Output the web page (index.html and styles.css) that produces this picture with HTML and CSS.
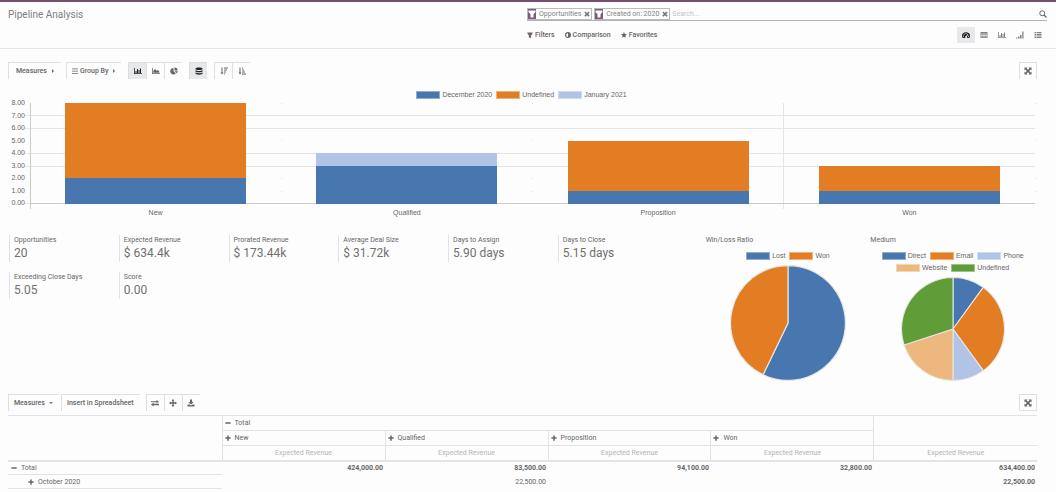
FILE: index.html
```html
<!DOCTYPE html>
<html lang="en">
<head>
<meta charset="utf-8">
<title>Pipeline Analysis</title>
<link rel="stylesheet" href="styles.css">
</head>
<body>
<svg class="sprite" aria-hidden="true">
  <symbol id="funnel" viewBox="0 0 16 16"><path d="M1 1h14v3l-4 4.500V15H5V8.500L1 4z"/></symbol>
  <symbol id="times" viewBox="0 0 16 16"><path d="M1 4l3-3 4 4 4-4 3 3-4 4 4 4-3 3-4-4-4 4-3-3 4-4z"/></symbol>
  <symbol id="adjust" viewBox="0 0 16 16"><path fill-rule="evenodd" d="M8 0a8 8 0 1 0 0 16A8 8 0 0 0 8 0zm0 3v10A5 5 0 0 1 8 3z"/></symbol>
  <symbol id="star" viewBox="0 0 16 16"><path d="M8 0l2.300 5.200L16 6l-4.200 3.800L13 15.500 8 12.600 3 15.500l1.200-5.700L0 6l5.700-.800z"/></symbol>
  <symbol id="search" viewBox="0 0 16 16"><circle cx="6.500" cy="6.500" r="5" fill="none" stroke="currentColor" stroke-width="2"/><path d="M10 10l5 5" stroke="currentColor" stroke-width="2.500"/></symbol>
  <symbol id="gauge" viewBox="0 0 16 16"><path fill-rule="evenodd" d="M0 10a8 7.500 0 0 1 16 0c0 1.500-.500 2.800-1.300 4H1.300C.500 12.800 0 11.500 0 10zm2-.500v2h2v-2zm1.500-4v2h2v-2zM7 4v2h2V4zm4.500 1.500L8.500 10a2 2 0 1 0 1.500.800L12.500 6.500zM12 9.500v2h2v-2z"/></symbol>
  <symbol id="grid" viewBox="0 0 16 16"><path fill-rule="evenodd" d="M1 2h14v12H1zm1.500 3v2H5V5zm4 0v2h3V5zM11 5v2h2.500V5zM2.500 8.200v2H5v-2zm4 0v2h3v-2zm4.500 0v2h2.500v-2zm-8.500 3v1.500H5v-1.500zm4 0v1.500h3v-1.500zm4.500 0v1.500h2.500v-1.500z"/></symbol>
  <symbol id="bars" viewBox="0 0 16 16"><path d="M0 2h1.500v10.500H16V14H0zM3 8h2v4H3zM6 4h2v8H6zM9 6h2v6H9zM12 3h2v9h-2z"/></symbol>
  <symbol id="area" viewBox="0 0 16 16"><path d="M0 2h1.500v10.500H16V14H0zM2.500 11.500V8L6 4l3.500 3.500L12 6l2.500 3v2.500z"/></symbol>
  <symbol id="pie" viewBox="0 0 16 16"><path d="M7 2v6.500l4.600 4.600A6.500 6.500 0 1 1 7 2zM9 1a6.500 6.500 0 0 1 6.500 6H9zM9 8.500h6.500a6.500 6.500 0 0 1-2 4z"/></symbol>
  <symbol id="signal" viewBox="0 0 16 16"><path d="M0 13h3v2H0zM4 11h3v4H4zM8 8h3v7H8zM12.500 1H15v14h-2.500z"/></symbol>
  <symbol id="list" viewBox="0 0 16 16"><path d="M1 2h3v2.500H1zM5 2h10v2.500H5zM1 5.800h3v2H1zM5 5.800h10v2H5zM1 9h3v2H1zM5 9h10v2H5zM1 12.200h3v2H1zM5 12.200h10v2H5z"/></symbol>
  <symbol id="menu" viewBox="0 0 16 16"><path d="M0 1h16v2H0zM0 7h16v2H0zM0 13h16v2H0z"/></symbol>
  <symbol id="stack" viewBox="0 0 16 16"><path d="M1 3c0-3 14-3 14 0v1.500c0 2-14 2-14 0zM1 6.500c2 1.800 12 1.800 14 0V9c0 2-14 2-14 0zM1 11c2 1.800 12 1.800 14 0v2c0 3-14 3-14 0z"/></symbol>
  <symbol id="desc" viewBox="0 0 16 16"><path d="M3 1h2v10h2l-3 4-3-4h2zM8 1h8v2H8zM8 5h6v2H8zM8 9h4v2H8zM8 13h2v2H8z"/></symbol>
  <symbol id="asc" viewBox="0 0 16 16"><path d="M3 1h2v10h2l-3 4-3-4h2zM8 1h2v2H8zM8 5h4v2H8zM8 9h6v2H8zM8 13h8v2H8z"/></symbol>
  <symbol id="expand" viewBox="0 0 16 16"><path d="M1 1h6L5.200 2.800 8 5.600l2.800-2.800L9 1h6v6l-1.800-1.800L10.400 8l2.800 2.800L15 9v6H9l1.800-1.800L8 10.400l-2.800 2.800L7 15H1V9l1.800 1.800L5.600 8 2.800 5.200 1 7z"/></symbol>
  <symbol id="swap" viewBox="0 0 16 16"><path d="M0 4.500h11V2l5 3.300-5 3V6.500H0zM16 9.500H5V7.700L0 11l5 4v-2.500h11z"/></symbol>
  <symbol id="move" viewBox="0 0 16 16"><path d="M8 0l3 3.500H9.300v3.200h3.200V5L16 8l-3.500 3V9.300H9.300v3.200H11L8 16l-3-3.500h1.700V9.300H3.500V11L0 8l3.500-3v1.700h3.200V3.500H5z"/></symbol>
  <symbol id="download" viewBox="0 0 16 16"><path d="M6 1h4v5h3.500L8 11 2.500 6H6zM1 11h4l3 2 3-2h4v4H1z"/></symbol>
  <symbol id="plus" viewBox="0 0 16 16"><path d="M6 1h4v5h5v4h-5v5H6v-5H1V6h5z"/></symbol>
  <symbol id="minus" viewBox="0 0 16 16"><path d="M1 6h14v4H1z"/></symbol>
</svg>

<header class="panel">
  <h1 class="title">Pipeline Analysis</h1>
  <div class="panel-right">
    <div class="searchbar">
      <span class="facet"><span class="facet-icon"><svg class="icon"><use href="#funnel"/></svg></span>Opportunities<button class="facet-remove" aria-label="Remove Opportunities"><svg class="icon small"><use href="#times"/></svg></button></span>
      <span class="facet"><span class="facet-icon"><svg class="icon"><use href="#funnel"/></svg></span>Created on: 2020<button class="facet-remove" aria-label="Remove Created on"><svg class="icon small"><use href="#times"/></svg></button></span>
      <input class="search-input" type="text" placeholder="Search..." aria-label="Search">
      <button class="plain" aria-label="Search"><svg class="icon"><use href="#search"/></svg></button>
    </div>
    <div class="options">
      <button class="plain"><svg class="icon small"><use href="#funnel"/></svg>Filters</button>
      <button class="plain"><svg class="icon small"><use href="#adjust"/></svg>Comparison</button>
      <button class="plain"><svg class="icon small"><use href="#star"/></svg>Favorites</button>
      <nav class="views" aria-label="Views">
        <button class="view active" aria-label="Dashboard"><svg class="icon"><use href="#gauge"/></svg></button>
        <button class="view" aria-label="Pivot"><svg class="icon"><use href="#grid"/></svg></button>
        <button class="view" aria-label="Graph"><svg class="icon"><use href="#bars"/></svg></button>
        <button class="view" aria-label="Cohort"><svg class="icon"><use href="#signal"/></svg></button>
        <button class="view" aria-label="List"><svg class="icon"><use href="#list"/></svg></button>
      </nav>
    </div>
  </div>
</header>

<main class="dashboard">
  <div class="toolbar">
    <button class="btn wide">Measures<span class="caret-right"></span></button>
    <button class="btn"><svg class="icon small"><use href="#menu"/></svg>Group By<span class="caret-right"></span></button>
    <div class="group">
      <button class="btn square active" aria-label="Bar chart"><svg class="icon"><use href="#bars"/></svg></button>
      <button class="btn square" aria-label="Line chart"><svg class="icon"><use href="#area"/></svg></button>
      <button class="btn square" aria-label="Pie chart"><svg class="icon"><use href="#pie"/></svg></button>
    </div>
    <button class="btn square active" aria-label="Stacked"><svg class="icon"><use href="#stack"/></svg></button>
    <div class="group">
      <button class="btn square" aria-label="Descending"><svg class="icon"><use href="#desc"/></svg></button>
      <button class="btn square" aria-label="Ascending"><svg class="icon"><use href="#asc"/></svg></button>
    </div>
    <button class="btn square end" aria-label="Expand graph"><svg class="icon"><use href="#expand"/></svg></button>
  </div>

  <section class="chart" aria-label="Opportunities by stage">
    <ul class="legend">
      <li><i class="swatch blue"></i>December 2020</li>
      <li><i class="swatch orange"></i>Undefined</li>
      <li><i class="swatch pale"></i>January 2021</li>
    </ul>
    <div class="plot">
      <ol class="scale"><li>8.00</li><li>7.00</li><li>6.00</li><li>5.00</li><li>4.00</li><li>3.00</li><li>2.00</li><li>1.00</li><li>0.00</li></ol>
      <svg class="ticks" shape-rendering="crispEdges"><path class="line" d="M0 16.500h5M0 29.500h5M0 54.500h5M0 67.500h5M0 104.500h5"/></svg>
      <svg class="bars" shape-rendering="crispEdges">
        <g class="line">
          <line x1="0" x2="100%" y1="16.500" y2="16.500"/>
          <line x1="0" x2="100%" y1="29.500" y2="29.500"/>
          <line x1="0" x2="100%" y1="54.500" y2="54.500"/>
          <line x1="0" x2="100%" y1="67.500" y2="67.500"/>
          <line x1="75%" x2="75%" y1="4" y2="110"/>
        </g>
        <g class="dots">
          <line x1="25%" x2="25%" y1="4" y2="104"/>
          <line x1="50%" x2="50%" y1="4" y2="104"/>
          <line x1="100%" x2="100%" y1="4" y2="104"/>
        </g>
        <g class="axis">
          <line x1="0" x2="0" y1="4" y2="110"/>
          <line x1="0" x2="100%" y1="104.500" y2="104.500"/>
        </g>
        <rect class="f-orange" x="3.500%" y="4" width="18%" height="75"/>
        <rect class="f-blue" x="3.500%" y="79" width="18%" height="26"/>
        <rect class="f-pale" x="28.500%" y="54" width="18%" height="13"/>
        <rect class="f-blue" x="28.500%" y="67" width="18%" height="38"/>
        <rect class="f-orange" x="53.500%" y="42" width="18%" height="50"/>
        <rect class="f-blue" x="53.500%" y="92" width="18%" height="13"/>
        <rect class="f-orange" x="78.500%" y="67" width="18%" height="25"/>
        <rect class="f-blue" x="78.500%" y="92" width="18%" height="13"/>
      </svg>
      <ul class="categories"><li>New</li><li>Qualified</li><li>Proposition</li><li>Won</li></ul>
    </div>
  </section>

  <section class="summary">
    <dl class="kpis">
      <div class="kpi"><dt>Opportunities</dt><dd>20</dd></div>
      <div class="kpi"><dt>Expected Revenue</dt><dd>$ 634.4k</dd></div>
      <div class="kpi"><dt>Prorated Revenue</dt><dd>$ 173.44k</dd></div>
      <div class="kpi"><dt>Average Deal Size</dt><dd>$ 31.72k</dd></div>
      <div class="kpi"><dt>Days to Assign</dt><dd>5.90 days</dd></div>
      <div class="kpi"><dt>Days to Close</dt><dd>5.15 days</dd></div>
      <div class="kpi"><dt>Exceeding Close Days</dt><dd>5.05</dd></div>
      <div class="kpi"><dt>Score</dt><dd>0.00</dd></div>
    </dl>
    <article class="pie-card">
      <h2>Win/Loss Ratio</h2>
      <ul class="legend">
        <li><i class="swatch blue"></i>Lost</li>
        <li><i class="swatch orange"></i>Won</li>
      </ul>
      <svg class="pie large" viewBox="-50 -50 100 100">
        <path class="f-blue" d="M0 0V-49.500A49.500 49.500 0 1 1 -21.480 44.600z"/>
        <path class="f-orange" d="M0 0L-21.480 44.600A49.500 49.500 0 0 1 0 -49.500z"/>
      </svg>
    </article>
    <article class="pie-card">
      <h2>Medium</h2>
      <ul class="legend">
        <li><i class="swatch blue"></i>Direct</li>
        <li><i class="swatch orange"></i>Email</li>
        <li><i class="swatch pale"></i>Phone</li>
        <li><i class="swatch peach"></i>Website</li>
        <li><i class="swatch green"></i>Undefined</li>
      </ul>
      <svg class="pie" viewBox="-50 -50 100 100">
        <path class="f-blue" d="M0 0V-49.500A49.500 49.500 0 0 1 29.100 -40.050z"/>
        <path class="f-orange" d="M0 0L29.100 -40.050A49.500 49.500 0 0 1 29.100 40.050z"/>
        <path class="f-pale" d="M0 0L29.100 40.050A49.500 49.500 0 0 1 0 49.500z"/>
        <path class="f-peach" d="M0 0V49.500A49.500 49.500 0 0 1 -47.080 15.300z"/>
        <path class="f-green" d="M0 0L-47.080 15.300A49.500 49.500 0 0 1 0 -49.500z"/>
      </svg>
    </article>
  </section>

  <div class="toolbar pivot-tools">
    <button class="btn">Measures<span class="caret-down"></span></button>
    <button class="btn">Insert in Spreadsheet</button>
    <div class="group">
      <button class="btn square" aria-label="Flip axis"><svg class="icon"><use href="#swap"/></svg></button>
      <button class="btn square" aria-label="Expand all"><svg class="icon"><use href="#move"/></svg></button>
      <button class="btn square" aria-label="Download"><svg class="icon"><use href="#download"/></svg></button>
    </div>
    <button class="btn square end" aria-label="Expand pivot"><svg class="icon"><use href="#expand"/></svg></button>
  </div>

  <table class="pivot">
    <colgroup><col class="col-label"><col><col><col><col><col></colgroup>
    <thead>
      <tr><td rowspan="3"></td><th colspan="4"><svg class="icon small"><use href="#minus"/></svg>Total</th><td rowspan="2"></td></tr>
      <tr>
        <th><svg class="icon small"><use href="#plus"/></svg>New</th>
        <th><svg class="icon small"><use href="#plus"/></svg>Qualified</th>
        <th><svg class="icon small"><use href="#plus"/></svg>Proposition</th>
        <th><svg class="icon small"><use href="#plus"/></svg>Won</th>
      </tr>
      <tr class="measures"><th>Expected Revenue</th><th>Expected Revenue</th><th>Expected Revenue</th><th>Expected Revenue</th><th>Expected Revenue</th></tr>
    </thead>
    <tbody>
      <tr class="total"><th><svg class="icon small"><use href="#minus"/></svg>Total</th><td>424,000.00</td><td>83,500.00</td><td>94,100.00</td><td>32,800.00</td><td>634,400.00</td></tr>
      <tr><th class="nested"><svg class="icon small"><use href="#plus"/></svg>October 2020</th><td></td><td>22,500.00</td><td></td><td></td><td class="sum">22,500.00</td></tr>
    </tbody>
  </table>
</main>
</body>
</html>
```
FILE: styles.css
```css
* { box-sizing: border-box; }

body {
  margin: 0;
  background: #fdfdfd;
  color: #666;
  font: 7px/10px Roboto, "Liberation Sans", sans-serif;
}

h1, h2, ul, ol, dl, dd { margin: 0; padding: 0; font-weight: 400; }
ul, ol { list-style: none; }
button { font: inherit; color: inherit; cursor: pointer; }

.sprite { display: none; }
.icon { width: 8px; height: 8px; fill: currentColor; flex: none; }
.icon.small { width: 6px; height: 6px; }

/* Control panel */
.panel {
  display: grid;
  grid-template-columns: 1fr 1fr;
  height: 49px;
  border-top: 2px solid #71526e;
  border-bottom: 1px solid #e6e6e6;
}
.title { padding: 7px 8px; font-size: 10px; line-height: 12px; color: #808080; }
.panel-right { padding: 6px 9px 0 0; margin-left: -1px; }
.searchbar {
  display: flex;
  align-items: center;
  gap: 2px;
  height: 13px;
  padding-bottom: 1px;
  border-bottom: 1px solid #b0b4b2;
}
.facet {
  display: flex;
  align-items: center;
  height: 12px;
  border: 1px solid #bbb;
  color: #828282;
}
.facet-icon {
  display: flex;
  align-items: center;
  align-self: stretch;
  margin-right: 3px;
  background: #7c5a78;
  color: #fff;
}
.facet-remove { display: flex; padding: 0 1px 0 3px; border: 0; background: none; color: #777; }
.search-input {
  flex: 1;
  min-width: 0;
  padding: 0;
  border: 0;
  outline: 0;
  background: none;
  font: inherit;
}
.search-input::placeholder { color: #c4c4c4; }
.plain {
  display: flex;
  align-items: center;
  gap: 2px;
  padding: 0;
  border: 0;
  background: none;
  font-weight: 500;
}
.options { display: flex; align-items: center; gap: 10px; padding-top: 6px; }
.views { display: flex; margin-left: auto; }
.view {
  display: flex;
  align-items: center;
  justify-content: center;
  width: 18px;
  height: 16px;
  padding: 0;
  border: 0;
  background: none;
  color: #808080;
}
.view.active { background: #e7e8ea; color: #222; }

/* Toolbars */
.dashboard { padding: 13px 19px 0 8px; }
.toolbar { display: flex; gap: 5px; height: 17px; }
.group { display: flex; margin: 0 2px; }
.btn {
  display: flex;
  align-items: center;
  gap: 2px;
  padding: 0 6px 0 5px;
  border: 1px solid #e0e0e0;
  border-width: 1px 0 0 1px;
  background: none;
  font-weight: 500;
}
.btn.wide { padding: 0 7px; }
.btn.square { justify-content: center; width: 18px; padding: 0; }
.btn.active { background: #e7e8ea; color: #222; border-color: #dcdcdc; }
.btn.end { margin-left: auto; border-right-width: 1px; }
.caret-right { margin-left: 3px; border: 2px solid transparent; border-left-color: #666; border-right-width: 0; }
.caret-down { margin-left: 2px; border: 2px solid transparent; border-top-color: #777; border-bottom-width: 0; }
.pivot-tools { gap: 2px; margin-top: 13px; }
.pivot-tools .group { margin: 0 4px; }
.pivot-tools .btn.end { border-bottom-width: 1px; }

/* Charts */
.legend {
  display: flex;
  flex-wrap: wrap;
  justify-content: center;
  gap: 3px 4px;
  font: 7px/9px "Liberation Sans", Arial, sans-serif;
}
.legend li { display: flex; align-items: center; gap: 2px; }
.swatch { width: 24px; height: 8px; border: 1px solid #ffffff66; }
.blue { background: #4876af; }
.orange { background: #e27d23; }
.pale { background: #b1c4e5; }
.peach { background: #edb87d; }
.green { background: #609d39; }
.f-blue { fill: #4876af; }
.f-orange { fill: #e27d23; }
.f-pale { fill: #b1c4e5; }
.f-peach { fill: #edb87d; }
.f-green { fill: #609d39; }

.chart { padding: 11px 2px 0 0; font: 7px/8px "Liberation Sans", Arial, sans-serif; }
.plot { display: grid; grid-template-columns: 17px 5px 1fr; }
.scale { display: flex; flex-direction: column; justify-content: space-between; height: 108px; text-align: right; }
.ticks, .bars { display: block; width: 100%; height: 110px; }
.bars { overflow: visible; }
.line { stroke: #e5e5e5; }
.dots { stroke: #dedede; stroke-dasharray: 1 36 1 37 1 12; }
.axis { stroke: #cbcbcb; }
.categories { grid-column: 3; display: grid; grid-template-columns: repeat(4, 1fr); text-align: center; }

/* Indicators and pies */
.summary { display: grid; grid-template-columns: 698fr 165fr 165fr; padding: 18px 2px 0 1px; }
.kpis {
  display: grid;
  grid-template-columns: repeat(6, 1fr);
  align-content: start;
  gap: 10px 0;
  padding-right: 38px;
}
.kpi { height: 27px; padding-left: 4px; border-left: 1px solid #dfe2e6; }
dd { font-size: 12px; line-height: 17px; color: #707070; }
.pie-card h2 { margin-bottom: 6px; font-size: 7px; line-height: 10px; }
.pie { display: block; width: 104px; height: 104px; margin: 5px auto 0; stroke: #e6e6e6; }
.pie.large { width: 116px; height: 116px; }

/* Pivot table */
.pivot { width: 100%; margin-top: 4px; border-collapse: collapse; table-layout: fixed; }
.col-label { width: 20.8%; }
.pivot th, .pivot td { height: 15px; padding: 0 2px; border: 1px solid #e2e3e8; }
.pivot th { font-weight: 400; text-align: left; }
.pivot th .icon { margin-right: 4px; vertical-align: -1px; }
.pivot thead tr > td { border-left: 0; border-right: 0; }
.pivot thead th:last-child { border-right: 1px solid #e2e3e8; }
.pivot thead .measures th { text-align: center; color: #b4b4b8; border-bottom: 2px solid #e4e4e6; }
.pivot thead .measures th:last-child { border-right: 0; }
.pivot thead td:first-child { border-bottom: 2px solid #e4e4e6; }
.pivot tbody th, .pivot tbody td { height: 14px; }
.pivot tbody td { padding: 0 2px; border: 0; text-align: right; }
.pivot tbody th { padding-left: 3px; border-width: 0 0 1px; }
.pivot tbody .nested { padding-left: 20px; }
.pivot .total td, .pivot .sum { font-weight: 700; }
```
